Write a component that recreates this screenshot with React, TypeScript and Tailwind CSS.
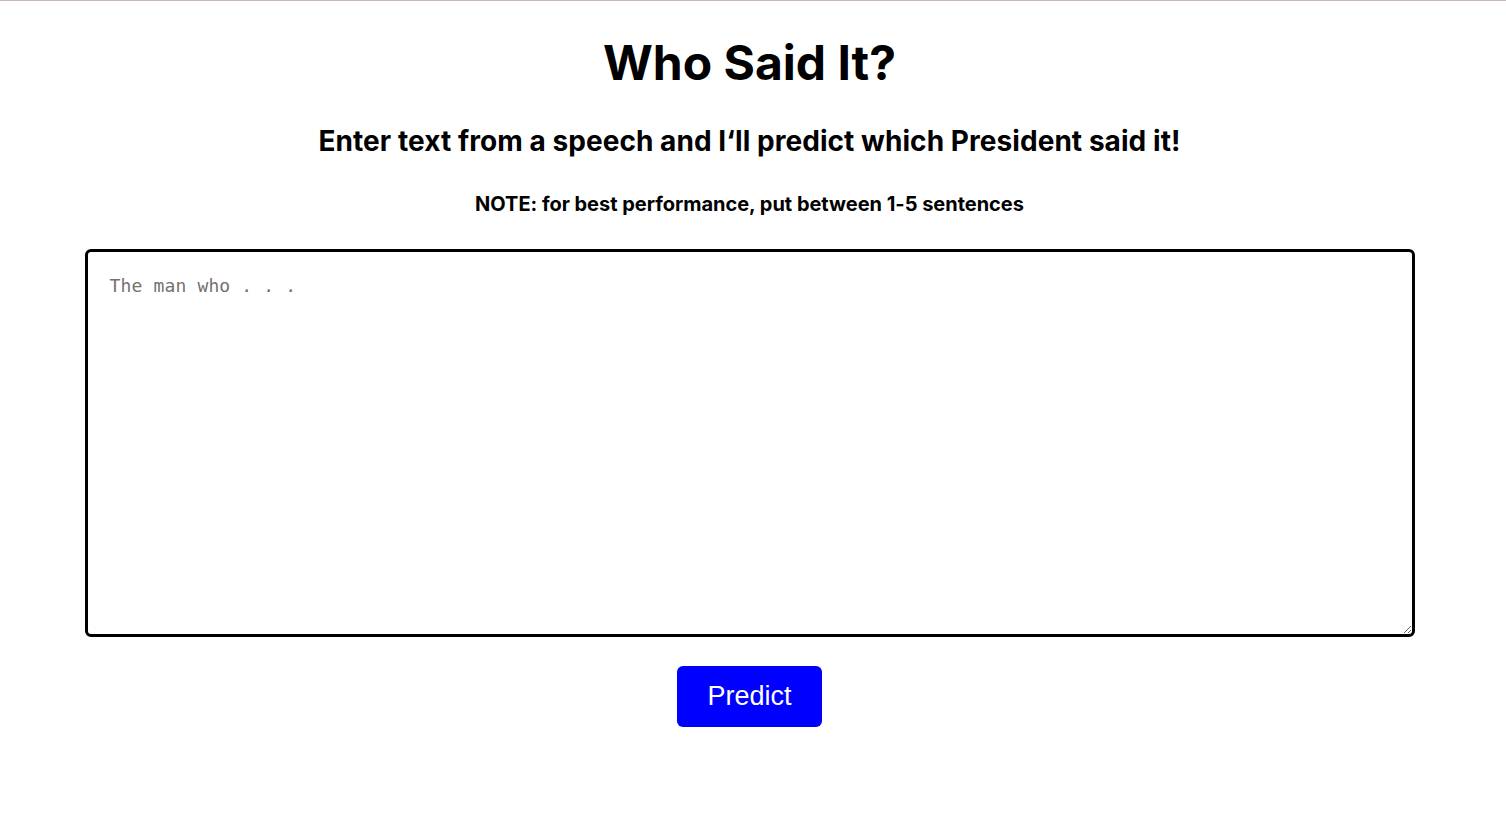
import React from "react";

export default function App() {
  return (
    <div className="min-h-screen bg-white border-t border-[#c9bab6] pr-[7px] font-['Inter','Noto_Sans',sans-serif]">
      <div className="flex flex-col items-center">
        <h1 className="mt-[32px] text-[48px] leading-[60px] font-bold text-black">Who Said It?</h1>
        <h2 className="mt-[31px] text-[28px] leading-[34px] font-bold text-black tracking-[0.06px]">Enter text from a speech and I‘ll predict which President said it!</h2>
        <h3 className="mt-[33px] text-[20px] leading-[26px] font-bold text-black tracking-[-0.02px]">NOTE: for best performance, put between 1-5 sentences</h3>
        <textarea
          placeholder="The man who . . ."
          className="mt-[32px] w-[1330px] h-[388px] border-[3px] border-black rounded-[6px] px-[22px] py-[22px] text-[18px] leading-[24px] tracking-[0.15px] placeholder:text-[#777070] outline-none font-['DejaVu_Sans_Mono',monospace]"
        />
        <button className="mt-[29px] w-[145px] h-[61px] bg-[#0000ff] text-white rounded-[6px] text-[27px] font-['Liberation_Sans',Arial,sans-serif]">
          Predict
        </button>
      </div>
    </div>
  );
}
